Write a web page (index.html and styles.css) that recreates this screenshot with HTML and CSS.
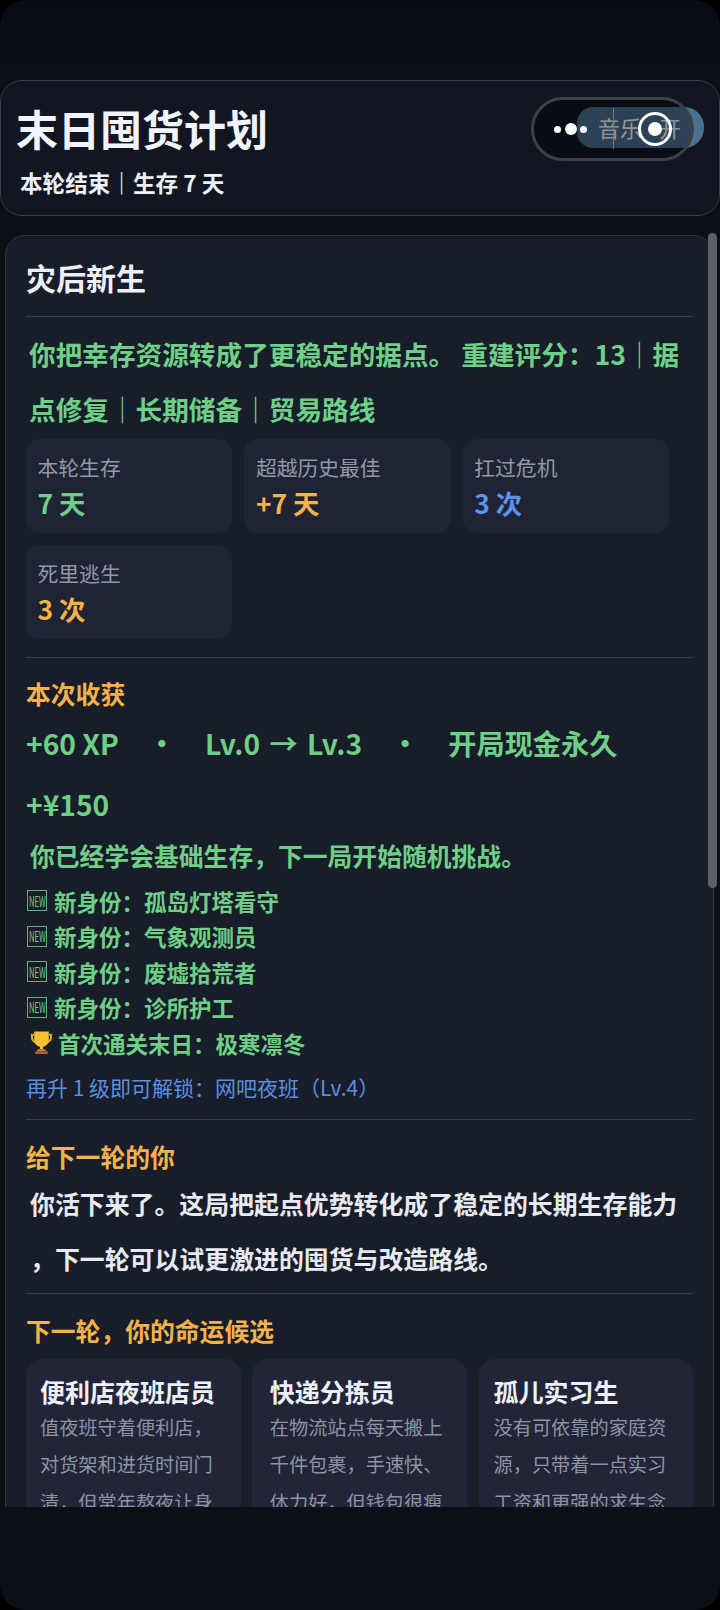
FILE: index.html
```html
<!DOCTYPE html>
<html lang="zh-CN">
<head>
<meta charset="utf-8">
<title>末日囤货计划</title>
<link rel="stylesheet" href="styles.css">
</head>
<body>
<div class="screen">
  <header class="top">
    <div class="top-text">
      <h1 class="game-title">末日囤货计划</h1>
      <p class="game-sub">本轮结束｜生存 7 天</p>
    </div>
    <div class="music">音乐<span class="music-dot">·</span>开</div>
    <div class="capsule">
      <span class="dots"><i class="dot"></i><i class="dot dot-big"></i><i class="dot"></i></span>
      <span class="cap-line"></span>
      <span class="cap-ring"><i class="cap-core"></i></span>
    </div>
  </header>
  <div class="viewport">
    <main class="card">
      <h2 class="card-title">灾后新生</h2>
      <section class="section sec-result">
        <p class="result">你把幸存资源转成了更稳定的据点。 重建评分：13｜据点修复｜长期储备｜贸易路线</p>
        <div class="stats">
          <div class="stat"><div class="stat-label">本轮生存</div><div class="stat-value green">7 天</div></div>
          <div class="stat"><div class="stat-label">超越历史最佳</div><div class="stat-value orange">+7 天</div></div>
          <div class="stat"><div class="stat-label">扛过危机</div><div class="stat-value blue">3 次</div></div>
          <div class="stat"><div class="stat-label">死里逃生</div><div class="stat-value orange">3 次</div></div>
        </div>
      </section>
      <section class="section sec-gain">
        <h3 class="heading">本次收获</h3>
        <p class="rewards">+60 XP<span class="sep">·</span><span class="level">Lv.0 → Lv.3</span><span class="sep">·</span>开局现金永久 <span class="keep">+¥150</span></p>
        <p class="learned">你已经学会基础生存，下一局开始随机挑战。</p>
        <ul class="unlocks">
          <li class="unlock"><span class="new-box"><span class="new-text">NEW</span></span>新身份：孤岛灯塔看守</li>
          <li class="unlock"><span class="new-box"><span class="new-text">NEW</span></span>新身份：气象观测员</li>
          <li class="unlock"><span class="new-box"><span class="new-text">NEW</span></span>新身份：废墟拾荒者</li>
          <li class="unlock"><span class="new-box"><span class="new-text">NEW</span></span>新身份：诊所护工</li>
          <li class="unlock unlock-trophy">
            <svg class="trophy" viewBox="0 0 24 24" aria-hidden="true">
              <path d="M5 3.500H1.800v3.200c0 3.600 2.600 6 5.800 6.300v-2c-2.200-.3-3.800-2-3.800-4.300V5.500H5z" fill="#e0a526"/>
              <path d="M19 3.500h3.200v3.200c0 3.600-2.600 6-5.800 6.300v-2c2.200-.3 3.800-2 3.800-4.300V5.500H19z" fill="#e0a526"/>
              <path d="M5 1.500h14v7.500c0 4-2.700 6.500-5.500 7v2.500h-3V16c-2.800-.5-5.500-3-5.500-7z" fill="#f7c033"/>
              <path d="M8.500 18.500h7l1 2h-9z" fill="#c9862a"/>
              <path d="M6 20.500h12V23H6z" fill="#b0643a"/>
            </svg>首次通关末日：极寒凛冬</li>
        </ul>
        <p class="next-unlock">再升 1 级即可解锁：网吧夜班（Lv.4）</p>
      </section>
      <section class="section sec-note">
        <h3 class="heading">给下一轮的你</h3>
        <p class="note">你活下来了。这局把起点优势转化成了稳定的长期生存能力，下一轮可以试更激进的囤货与改造路线。</p>
      </section>
      <section class="section sec-next">
        <h3 class="heading">下一轮，你的命运候选</h3>
        <div class="fates">
          <article class="fate"><h4 class="fate-name">便利店夜班店员</h4><p class="fate-desc">值夜班守着便利店，对货架和进货时间门清，但常年熬夜让身体吃不消。</p></article>
          <article class="fate fate-mid"><h4 class="fate-name">快递分拣员</h4><p class="fate-desc">在物流站点每天搬上千件包裹，手速快、体力好，但钱包很瘦。</p></article>
          <article class="fate fate-last"><h4 class="fate-name">孤儿实习生</h4><p class="fate-desc">没有可依靠的家庭资源，只带着一点实习工资和更强的求生念头。</p></article>
        </div>
      </section>
    </main>
    <div class="scroll-thumb"></div>
  </div>
</div>
</body>
</html>
```
FILE: styles.css
```css
* { box-sizing: border-box; }
html, body { margin: 0; padding: 0; background: #000; }
body { width: 720px; height: 1610px; overflow: hidden; font-family: "Noto Sans CJK SC", "Noto Sans", sans-serif; }
h1, h2, h3, h4, p, ul { margin: 0; padding: 0; }
ul { list-style: none; }

.screen {
  width: 720px; height: 1610px; padding-top: 80px; overflow: hidden;
  border-radius: 26px;
  background: linear-gradient(#090c12, #0c1016 80px);
}

.top {
  position: relative; height: 136px; padding: 20px 0 0 15px;
  background: #111620; border: 1px solid #383d4a; border-radius: 22px;
}
.game-title { font-size: 42px; line-height: 54px; font-weight: 700; color: #f2f4fb; }
.game-sub { margin: 12px 0 0 4px; font-size: 22.600px; line-height: 32px; font-weight: 700; color: #eef0f8; }

.music {
  position: absolute; left: 576px; top: 26px; width: 127px; height: 41px; padding-left: 21px;
  border-radius: 16px 20px 20px 16px; background: #4a7192;
  font-size: 22px; line-height: 40px; color: #fff; white-space: nowrap;
}
.music-dot { display: inline-block; width: 17px; font-family: "Noto Sans", sans-serif; text-align: center; }
.capsule {
  position: absolute; left: 530px; top: 16px; width: 163px; height: 64px;
  border: 3px solid #3d4049; border-radius: 32px; background: rgba(0, 0, 0, .42);
}
.dots { position: absolute; left: 20px; top: 23px; display: flex; align-items: center; gap: 3.500px; height: 12px; }
.dot { display: block; width: 7px; height: 7px; border-radius: 50%; background: #fff; }
.dot-big { width: 12px; height: 12px; }
.cap-line { position: absolute; left: 79px; top: 8px; width: 1px; height: 41px; background: #6c7480; }
.cap-ring {
  position: absolute; left: 103.500px; top: 12px; width: 34px; height: 34px;
  display: flex; align-items: center; justify-content: center;
  border: 3.500px solid #fff; border-radius: 50%;
}
.cap-core { display: block; width: 14px; height: 14px; border-radius: 50%; background: #fff; }

.viewport { position: relative; height: 1274px; margin-top: 17px; padding-top: 2px; overflow: hidden; }
.card {
  width: 709px; margin-left: 5px; padding: 0 20px;
  background: #181d2a; border: 1px solid #2f3441; border-radius: 20px;
}
.scroll-thumb {
  position: absolute; left: 708px; top: 0; width: 9px; height: 655px;
  border-radius: 4.500px; background: #5b6066;
}

.card-title { height: 80px; padding-top: 20px; font-size: 30px; line-height: 42px; font-weight: 700; color: #eef0f8; }
.section { border-top: 1px solid #363b47; }

.result { margin-top: 9px; padding-left: 3px; font-size: 26.650px; line-height: 55px; font-weight: 700; color: #6fcf87; }
.stats { display: grid; grid-template-columns: repeat(3, 206.400px); gap: 12px; margin-top: 3px; padding-bottom: 18px; }
.stat { height: 94px; padding: 11px 11.500px; background: #1f2435; border-radius: 14px; }
.stat-label { font-size: 20.800px; line-height: 34px; color: #9298a6; }
.stat-value { font-size: 26.400px; line-height: 38px; font-weight: 700; }
.green { color: #6fcf87; }
.orange { color: #f5b14a; }
.blue { color: #5b93f0; }

.heading { font-size: 24.800px; line-height: 34px; font-weight: 700; color: #f5b14a; }
.sec-gain { padding-top: 18px; }
.rewards { margin-top: 2px; font-size: 28.200px; line-height: 61px; font-weight: 700; color: #6fcf87; }
.sep { margin: 0 29px; }
.level { word-spacing: 3px; }
.keep { white-space: nowrap; }
.learned { margin-top: 1px; padding-left: 4px; font-size: 24.800px; line-height: 40px; font-weight: 700; color: #6fcf87; }
.unlocks { margin-top: 8px; padding-left: 1px; }
.unlock { display: flex; align-items: center; height: 35.500px; font-size: 22.500px; font-weight: 700; color: #6fcf87; white-space: nowrap; }
.new-box {
  display: inline-flex; align-items: center; justify-content: center;
  width: 20px; height: 21px; margin-right: 7px; border: 1px solid #5fb37b; overflow: hidden;
}
.new-text { font-size: 14px; line-height: 1; font-weight: 400; transform: scaleX(.55); }
.trophy { width: 25px; height: 25px; margin: 0 4px 0 2px; }
.next-unlock { margin-top: 8px; padding-bottom: 14px; font-size: 21px; line-height: 36px; color: #5b8fe0; }

.sec-note { padding-top: 19px; }
.note { margin-top: 3px; padding: 0 0 6px 4px; font-size: 24.900px; line-height: 55.500px; font-weight: 700; color: #e8eaf2; line-break: anywhere; }

.sec-next { padding-top: 19px; }
.fates { display: grid; grid-template-columns: repeat(3, 214.700px); gap: 11.600px; margin-top: 12px; }
.fate { padding: 15px 14px; background: #212537; border-radius: 16px; }
.fate-mid { padding-left: 17.500px; }
.fate-last { padding-left: 15px; }
.fate-name { font-size: 25px; line-height: 35px; font-weight: 700; color: #eef0f8; white-space: nowrap; }
.fate-desc { font-size: 19.200px; line-height: 37.500px; color: #8d93a3; line-break: anywhere; }
```
